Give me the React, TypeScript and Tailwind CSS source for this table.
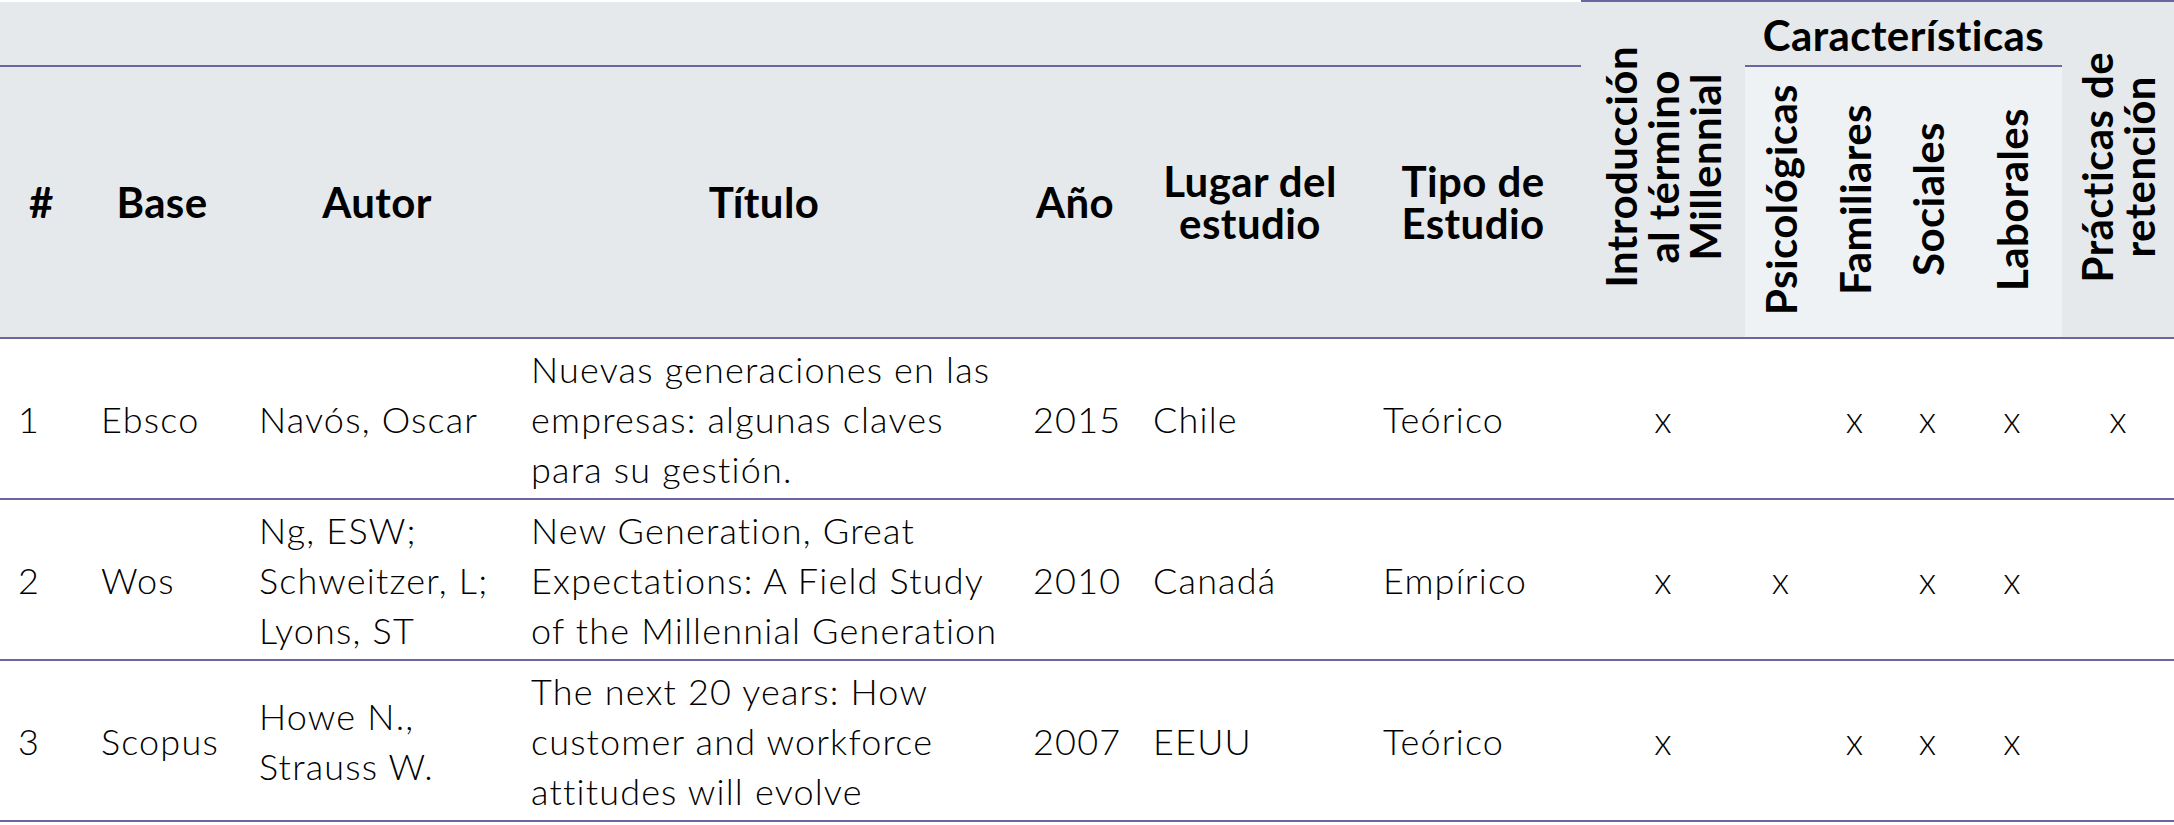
import React from "react";

type Row = {
  n: string;
  base: string;
  autor: string[];
  titulo: string[];
  anio: string;
  lugar: string;
  tipo: string;
  marks: boolean[];
};

const rows: Row[] = [
  {
    n: "1",
    base: "Ebsco",
    autor: ["Navós, Oscar"],
    titulo: ["Nuevas generaciones en las", "empresas: algunas claves", "para su gestión."],
    anio: "2015",
    lugar: "Chile",
    tipo: "Teórico",
    marks: [true, false, true, true, true, true],
  },
  {
    n: "2",
    base: "Wos",
    autor: ["Ng, ESW;", "Schweitzer, L;", "Lyons, ST"],
    titulo: ["New Generation, Great", "Expectations: A Field Study", "of the Millennial Generation"],
    anio: "2010",
    lugar: "Canadá",
    tipo: "Empírico",
    marks: [true, true, false, true, true, false],
  },
  {
    n: "3",
    base: "Scopus",
    autor: ["Howe N.,", "Strauss W."],
    titulo: ["The next 20 years: How", "customer and workforce", "attitudes will evolve"],
    anio: "2007",
    lugar: "EEUU",
    tipo: "Teórico",
    marks: [true, false, true, true, true, false],
  },
];

const widths = [83, 158, 272, 502, 120, 230, 216, 164, 71, 77, 69, 100, 112];

function Lines({ lines }: { lines: string[] }) {
  return (
    <>
      {lines.map((l, i) => (
        <React.Fragment key={i}>
          {i > 0 && <br />}
          {l}
        </React.Fragment>
      ))}
    </>
  );
}

function Vert({ lines }: { lines: string[] }) {
  return (
    <div className="inline-block [writing-mode:vertical-rl] rotate-180 text-center whitespace-nowrap">
      <Lines lines={lines} />
    </div>
  );
}

const th =
  "bg-[#e5e9ec] text-black font-bold text-[42px] leading-[42px] tracking-[0.01em] text-center align-middle whitespace-nowrap p-0";
const thB = "border-b-2 border-b-[#6d65a0]";
const td =
  "pl-[18px] pr-0 text-left align-middle border-b-2 border-b-[#6d65a0] text-[36px] leading-[50px] tracking-[0.033em] whitespace-nowrap text-black font-light";
const tdX =
  "text-center align-middle border-b-2 border-b-[#6d65a0] text-[37px] leading-[50px] text-black font-light";

export default function App() {
  return (
    <div className="w-[2174px] h-[825px] bg-white [font-family:Lato,'Noto_Sans',sans-serif]">
      <table className="table-fixed border-separate border-spacing-0 w-[2174px]">
        <colgroup>
          {widths.map((w, i) => (
            <col key={i} style={{ width: w }} />
          ))}
        </colgroup>
        <thead>
          <tr className="h-[67px]">
            <th colSpan={7} className={`${th} ${thB} border-t-2 border-t-white`}></th>
            <th rowSpan={2} className={`${th} ${thB} border-t-2 border-t-[#6d65a0]`}>
              <Vert lines={["Introducción", "al término", "Millennial"]} />
            </th>
            <th
              colSpan={4}
              className={`${th} ${thB} border-t-2 border-t-[#6d65a0] leading-[44px] pt-[2px]`}
            >
              Características
            </th>
            <th rowSpan={2} className={`${th} ${thB} border-t-2 border-t-[#6d65a0]`}>
              <Vert lines={["Prácticas de", "retención"]} />
            </th>
          </tr>
          <tr className="h-[272px]">
            <th className={`${th} ${thB}`}>#</th>
            <th className={`${th} ${thB}`}>Base</th>
            <th className={`${th} ${thB}`}>Autor</th>
            <th className={`${th} ${thB}`}>Título</th>
            <th className={`${th} ${thB}`}>Año</th>
            <th className={`${th} ${thB}`}>
              <Lines lines={["Lugar del", "estudio"]} />
            </th>
            <th className={`${th} ${thB}`}>
              <Lines lines={["Tipo de", "Estudio"]} />
            </th>
            <th className={`${th} ${thB} bg-[#eff2f5]`}>
              <Vert lines={["Psicológicas"]} />
            </th>
            <th className={`${th} ${thB} bg-[#eff2f5]`}>
              <Vert lines={["Familiares"]} />
            </th>
            <th className={`${th} ${thB} bg-[#eff2f5]`}>
              <Vert lines={["Sociales"]} />
            </th>
            <th className={`${th} ${thB} bg-[#eff2f5]`}>
              <Vert lines={["Laborales"]} />
            </th>
          </tr>
        </thead>
        <tbody>
          {rows.map((r) => (
            <tr key={r.n} className="h-[161px]">
              <td className={td}>{r.n}</td>
              <td className={td}>{r.base}</td>
              <td className={td}>
                <Lines lines={r.autor} />
              </td>
              <td className={td}>
                <Lines lines={r.titulo} />
              </td>
              <td className={td}>{r.anio}</td>
              <td className={td}>{r.lugar}</td>
              <td className={td}>{r.tipo}</td>
              {r.marks.map((m, i) => (
                <td key={i} className={tdX}>
                  {m ? "x" : ""}
                </td>
              ))}
            </tr>
          ))}
        </tbody>
      </table>
    </div>
  );
}
